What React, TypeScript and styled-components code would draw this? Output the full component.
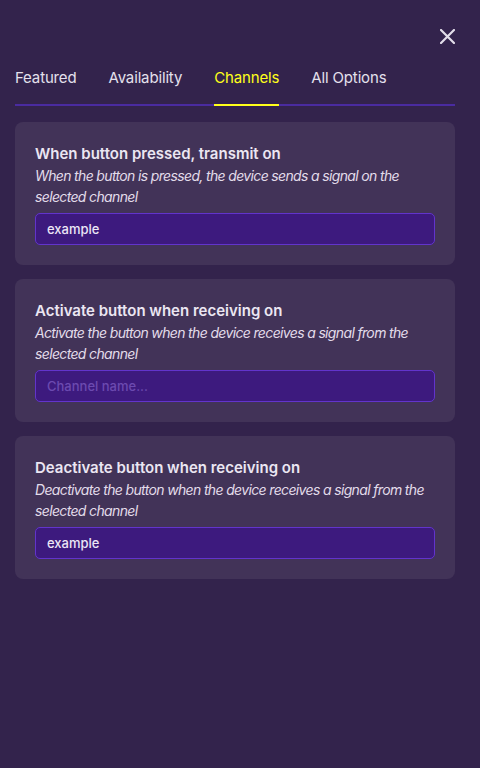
import React from "react";
import styled, { createGlobalStyle } from "styled-components";

const Global = createGlobalStyle`
  html, body { margin: 0; padding: 0; background: #33234c; }
  body { font-family: Inter, "Noto Sans", sans-serif; -webkit-font-smoothing: antialiased; }
  * { box-sizing: border-box; }
`;

const Page = styled.div`
  width: 480px;
  height: 768px;
  background: #33234c;
  padding: 0 25px 0 15px;
  display: flex;
  flex-direction: column;
`;

const TopBar = styled.div`
  display: flex;
  justify-content: flex-end;
  padding-top: 29px;
  height: 44px;
`;

const CloseButton = styled.button`
  width: 15px;
  height: 15px;
  padding: 0;
  border: none;
  background: transparent;
  display: flex;
  cursor: pointer;
`;

const Tabs = styled.div`
  display: flex;
  gap: 32px;
  height: 62px;
  border-bottom: 2px solid #4a2ba0;
`;

const Tab = styled.div<{ $active?: boolean }>`
  font-size: 15px;
  font-weight: 400;
  letter-spacing: -0.15px;
  color: ${(p) => (p.$active ? "#ffff1a" : "#e4e0ec")};
  display: flex;
  align-items: center;
  position: relative;
  padding-top: 6px;
  &::after {
    content: "";
    position: absolute;
    left: 0;
    right: 0;
    bottom: -2px;
    height: 2px;
    background: ${(p) => (p.$active ? "#ffff1a" : "transparent")};
  }
`;

const List = styled.div`
  display: flex;
  flex-direction: column;
  gap: 14px;
  margin-top: 16px;
`;

const Card = styled.div`
  background: #423358;
  border-radius: 8px;
  padding: 21px 20px 20px;
  display: flex;
  flex-direction: column;
`;

const Title = styled.div`
  font-size: 15px;
  line-height: 22px;
  font-weight: 600;
  color: #ebe6f2;
`;

const Desc = styled.div`
  font-size: 14px;
  line-height: 21px;
  letter-spacing: -0.65px;
  font-style: italic;
  color: #e2dcea;
`;

const Input = styled.input`
  margin-top: 6px;
  height: 32px;
  width: 100%;
  background: #3d1a7e;
  border: 1px solid #6234cc;
  border-radius: 5px;
  padding: 0 11px;
  font-family: Inter, "Noto Sans", sans-serif;
  font-size: 13px;
  font-weight: 500;
  color: #ece6f6;
  outline: none;
  &::placeholder {
    color: #6c4ab0;
  }
`;

const items = [
  {
    title: "When button pressed, transmit on",
    desc: "When the button is pressed, the device sends a signal on the selected channel",
    value: "example",
  },
  {
    title: "Activate button when receiving on",
    desc: "Activate the button when the device receives a signal from the selected channel",
    value: "",
  },
  {
    title: "Deactivate button when receiving on",
    desc: "Deactivate the button when the device receives a signal from the selected channel",
    value: "example",
  },
];

export default function App() {
  return (
    <>
      <Global />
      <Page>
        <TopBar>
          <CloseButton aria-label="Close">
            <svg width="15" height="15" viewBox="0 0 15 15">
              <path d="M1 1 L14 14 M14 1 L1 14" stroke="#e2dde9" strokeWidth="2.2" strokeLinecap="round" />
            </svg>
          </CloseButton>
        </TopBar>
        <Tabs>
          <Tab>Featured</Tab>
          <Tab>Availability</Tab>
          <Tab $active>Channels</Tab>
          <Tab>All Options</Tab>
        </Tabs>
        <List>
          {items.map((it) => (
            <Card key={it.title}>
              <Title>{it.title}</Title>
              <Desc>{it.desc}</Desc>
              <Input defaultValue={it.value} placeholder="Channel name..." />
            </Card>
          ))}
        </List>
      </Page>
    </>
  );
}
